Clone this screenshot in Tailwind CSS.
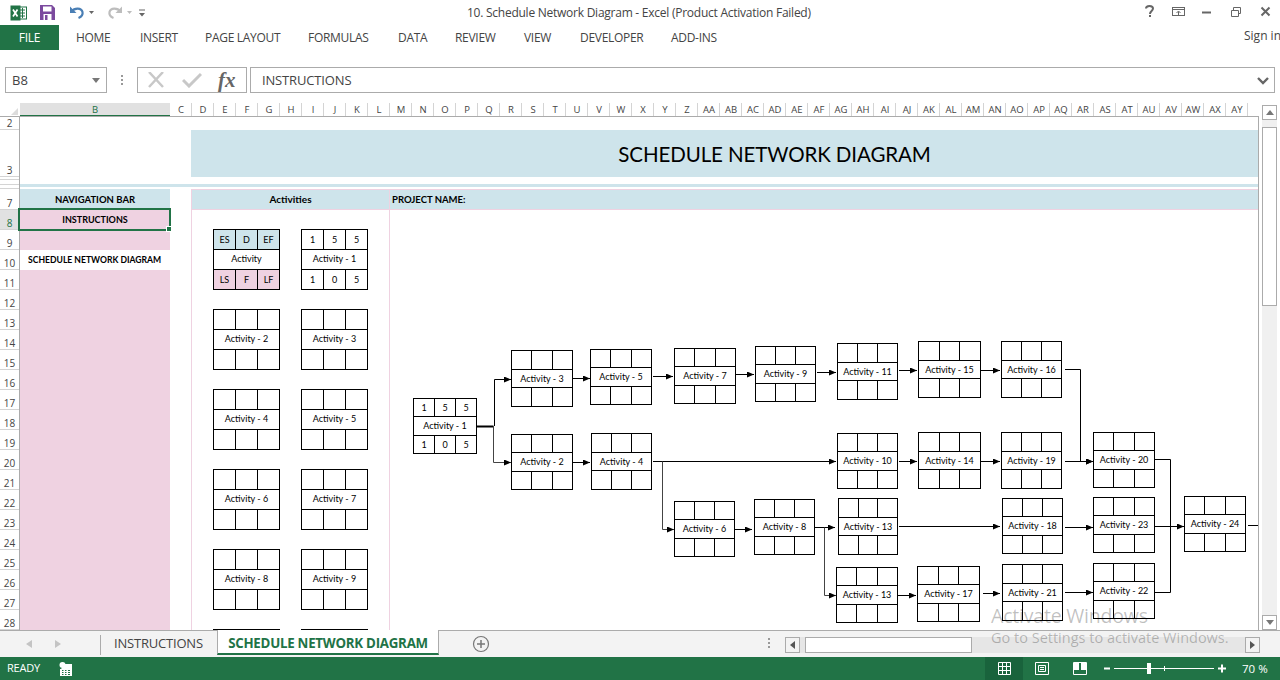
<!DOCTYPE html>
<html lang="en">
<head>
    <meta charset="UTF-8">
    <title>10. Schedule Network Diagram - Excel</title>
    <script src="https://cdn.jsdelivr.net/npm/@tailwindcss/browser@4"></script>
</head>
<body class="bg-white overflow-hidden">
<div class="relative w-[1280px] h-[680px] flex flex-col overflow-hidden bg-white text-[#444] font-['Open_Sans',sans-serif]">

    <!-- title bar -->
    <div class="relative h-[25px] flex items-center shrink-0">
        <svg class="ml-[10px] w-[17px] h-[16px]" viewBox="0 0 17 16">
            <rect x="7" y="2" width="9.5" height="12" fill="#fff" stroke="#217346"/>
            <path d="M10 5h5M10 8h5M10 11h5M12.5 3v10" stroke="#217346"/>
            <rect x="0.5" y="0.5" width="10" height="15" fill="#217346"/>
            <path d="M3 4.5l4.5 7M7.5 4.5l-4.5 7" stroke="#fff" stroke-width="1.7"/>
        </svg>
        <svg class="ml-[13px] w-[15px] h-[15px]" viewBox="0 0 15 15">
            <path d="M0 0h12l3 3v12H0z" fill="#7b4a9e"/>
            <rect x="3" y="1.5" width="8.5" height="5" fill="#fff"/>
            <rect x="3.5" y="9" width="8" height="6" fill="#fff"/>
            <rect x="5" y="10" width="2.5" height="5" fill="#7b4a9e"/>
        </svg>
        <svg class="ml-[14px] w-[26px] h-[15px]" viewBox="0 0 26 15">
            <path d="M2.5 6.5c3-4 10-4 11 .5.6 3-1.5 5-4 6" fill="none" stroke="#4a7fb5" stroke-width="2.2"/>
            <path d="M1 1.5v6.5h6.5z" fill="#4a7fb5"/>
            <path d="M20 6h5l-2.5 3z" fill="#666"/>
        </svg>
        <svg class="ml-[12px] w-[26px] h-[15px]" viewBox="0 0 26 15">
            <path d="M13.5 6.5c-3-4-10-4-11 .5-.6 3 1.5 5 4 6" fill="none" stroke="#bdbdbd" stroke-width="2.2"/>
            <path d="M15 1.5v6.5H8.500z" fill="#bdbdbd"/>
            <path d="M20 6h5l-2.500 3z" fill="#bdbdbd"/>
        </svg>
        <svg class="ml-[6px] w-[7px] h-[8px]" viewBox="0 0 7 8">
            <path d="M0 1h6" stroke="#666"/><path d="M0 4h6L3 7.500z" fill="#666"/>
        </svg>
        <div class="absolute left-[467px] top-[4px] text-[12px] leading-[17px] tracking-[-0.25px] text-[#444] whitespace-nowrap">10. Schedule Network Diagram - Excel (Product Activation Failed)</div>
        <svg class="absolute left-[1143px] top-[4px] w-[130px] h-[16px]" viewBox="0 0 130 16">
            <path d="M3 4.500c0-3.500 7-3.500 7 0 0 2.500-3 2.500-3 5.500" fill="none" stroke="#666" stroke-width="2"/>
            <rect x="6" y="11" width="2" height="2" fill="#666"/>
            <rect x="29.500" y="3.500" width="12" height="8" fill="none" stroke="#666"/>
            <path d="M30 5.500h11M35.500 11V7.500M33.500 9l2-2 2 2" fill="none" stroke="#666"/>
            <path d="M59 8.500h9" stroke="#666" stroke-width="2"/>
            <path d="M88.500 6.500h7v6h-7zM90.500 6V3.500h7v6H96" fill="none" stroke="#666"/>
            <path d="M118.500 3.500l8 8M126.500 3.500l-8 8" stroke="#666" stroke-width="2"/>
        </svg>
    </div>

    <!-- ribbon tabs -->
    <div class="relative h-[25px] flex items-center shrink-0 text-[12px] tracking-[-0.3px] text-[#444]">
        <div class="w-[59px] h-[25px] bg-[#217346] text-white flex items-center justify-center mr-[17px]">FILE</div>
        <div class="w-[64px]">HOME</div>
        <div class="w-[65px]">INSERT</div>
        <div class="w-[103px]">PAGE LAYOUT</div>
        <div class="w-[90px]">FORMULAS</div>
        <div class="w-[57px]">DATA</div>
        <div class="w-[69px]">REVIEW</div>
        <div class="w-[56px]">VIEW</div>
        <div class="w-[91px]">DEVELOPER</div>
        <div>ADD-INS</div>
        <div class="absolute left-[1244px] top-[2px] whitespace-nowrap tracking-[0px]">Sign in</div>
    </div>

    <!-- formula bar -->
    <div class="h-[26px] mt-[17px] flex shrink-0 text-[#444]">
        <div class="ml-[5px] w-[102px] border border-[#ababab] flex items-center justify-between pl-[6px] pr-[6px] pt-px text-[13px]">
            B8
            <svg class="w-[8px] h-[5px]" viewBox="0 0 8 5"><path d="M0 0h8L4 5z" fill="#777"/></svg>
        </div>
        <div class="w-[30px] flex flex-col items-center justify-center gap-[2px]">
            <span class="w-[2px] h-[2px] bg-[#999]"></span><span class="w-[2px] h-[2px] bg-[#999]"></span><span class="w-[2px] h-[2px] bg-[#999]"></span>
        </div>
        <div class="w-[110px] border border-[#ababab] flex items-center pl-[9px]">
            <svg class="w-[18px] h-[16px]" viewBox="0 0 18 16"><path d="M2 0l14 15M16 0L2 15" stroke="#c8c8c8" stroke-width="2.500"/></svg>
            <svg class="ml-[17px] w-[20px] h-[16px]" viewBox="0 0 20 16"><path d="M1 8l6 6L19 2" fill="none" stroke="#c8c8c8" stroke-width="3"/></svg>
            <span class="ml-[16px] text-[21px] leading-none italic font-bold text-[#666] font-['Liberation_Serif',serif]">fx</span>
        </div>
        <div class="ml-[3px] w-[1025px] border border-[#ababab] flex items-center justify-between pl-[11px] pr-[5px] pt-px text-[13px] tracking-[-0.15px]">
            INSTRUCTIONS
            <svg class="w-[12px] h-[8px]" viewBox="0 0 12 8"><path d="M1 1l5 5 5-5" fill="none" stroke="#666" stroke-width="2.400"/></svg>
        </div>
    </div>

    <!-- sheet + vertical scrollbar -->
    <div class="mt-[10px] h-[527px] flex shrink-0">
        <div class="relative w-[1259px] flex flex-col">
            <!-- column headers -->
            <div id="columns" class="h-[14px] flex shrink-0 overflow-hidden border-b border-[#ababab] text-[9.5px] leading-[13px] text-[#444]">
                <div class="w-[20px] shrink-0 flex items-end justify-end pr-[2px] pb-[1px]">
                    <svg class="w-[7px] h-[7px]" viewBox="0 0 7 7"><path d="M7 0v7H0z" fill="#dcdcdc"/></svg>
                </div>
                <div class="w-[150px] shrink-0 bg-[#e1e1e1] text-center text-[#217346] border-b-2 border-[#217346] h-[14px]">B</div>
            </div>

            <div class="flex h-[513px]">
                <!-- row headers -->
                <div id="rows" class="w-[20px] shrink-0 border-r border-[#ababab] overflow-hidden text-[10px] text-[#444]"></div>

                <!-- cells -->
                <div class="relative w-[1239px] border-r border-[#ababab] overflow-hidden">
                    <div class="h-[13px]"></div>
                    <div class="ml-[171px] pl-[100px] pt-[2px] h-[47px] bg-[#cee4eb] flex items-center justify-center text-[20.500px] tracking-[-0.1px] text-black font-['Lato',sans-serif]">SCHEDULE NETWORK DIAGRAM</div>
                    <div class="mt-[7px] h-[3px] bg-[#cee4eb]"></div>
                    <div class="mt-[2px] h-[441px] flex font-['Lato',sans-serif] text-black">
                        <!-- navigation -->
                        <div class="w-[150px] shrink-0 flex flex-col text-center font-bold text-[9.500px]">
                            <div class="h-[21px] pt-[2px] bg-[#cee4eb] flex items-center justify-center">NAVIGATION BAR</div>
                            <div class="h-[20px] bg-[#efd2e1] flex items-center justify-center text-[9px]">INSTRUCTIONS</div>
                            <div class="h-[20px] bg-[#efd2e1]"></div>
                            <div class="h-[20px] flex items-center pl-[8px] text-[8.600px] whitespace-nowrap">SCHEDULE NETWORK DIAGRAM</div>
                            <div class="flex-1 bg-[#efd2e1]"></div>
                        </div>
                        <!-- activities -->
                        <div class="ml-[21px] w-[199px] shrink-0 border-x border-[#efd2e1] flex flex-col">
                            <div class="h-[21px] shrink-0 bg-[#cee4eb] border-y border-[#efd2e1] flex items-center justify-center font-bold text-[10px]">Activities</div>
                            <div id="cards" class="pl-[21px] pt-[19px] grid grid-cols-[67px_67px] gap-x-[21px] gap-y-[19px] text-[9px]">
                                <div class="h-[61px] p-px gap-px bg-black grid grid-cols-3 grid-rows-3 text-center">
                                    <div class="bg-[#cee4eb] flex items-center justify-center">ES</div>
                                    <div class="bg-[#cee4eb] flex items-center justify-center">D</div>
                                    <div class="bg-[#cee4eb] flex items-center justify-center">EF</div>
                                    <div class="col-span-3 bg-white flex items-center justify-center pb-[2px]">Activity</div>
                                    <div class="bg-[#efd2e1] flex items-center justify-center">LS</div>
                                    <div class="bg-[#efd2e1] flex items-center justify-center">F</div>
                                    <div class="bg-[#efd2e1] flex items-center justify-center">LF</div>
                                </div>
                                <div class="h-[61px] p-px gap-px bg-black grid grid-cols-3 grid-rows-3 text-center">
                                    <div class="bg-white flex items-center justify-center">1</div>
                                    <div class="bg-white flex items-center justify-center">5</div>
                                    <div class="bg-white flex items-center justify-center">5</div>
                                    <div class="col-span-3 bg-white flex items-center justify-center pb-[2px]">Activity - 1</div>
                                    <div class="bg-white flex items-center justify-center">1</div>
                                    <div class="bg-white flex items-center justify-center">0</div>
                                    <div class="bg-white flex items-center justify-center">5</div>
                                </div>
                            </div>
                        </div>
                        <!-- project diagram -->
                        <div class="relative flex-1">
                            <div class="h-[21px] pt-[2px] bg-[#cee4eb] border-y border-[#efd2e1] flex items-center pl-[2px] font-bold text-[9.500px]">PROJECT NAME:</div>
                            <div id="diagram" class="absolute left-0 top-0 w-[868px] h-[441px] text-[9px]">
                                <svg class="absolute left-0 top-0 w-[868px] h-[441px]" viewBox="390 189 868 441" fill="none" stroke="#000">
                                    <defs>
                                        <marker id="head" markerUnits="userSpaceOnUse" markerWidth="7" markerHeight="6" refX="7" refY="3" orient="auto">
                                            <path d="M0 0L7 3L0 6z" fill="#000" stroke="none"/>
                                        </marker>
                                    </defs>
                                    <path d="M476 426.500h17.500" stroke-width="2"/>
                                    <path d="M494.500 426V379.500H511" marker-end="url(#head)"/>
                                    <path d="M493.500 426V462.500H511" stroke="#444" marker-end="url(#head)"/>
                                    <path d="M572 378.500h18" marker-end="url(#head)"/>
                                    <path d="M572 462.500h18" marker-end="url(#head)"/>
                                    <path d="M653 376.500h20" marker-end="url(#head)"/>
                                    <path d="M653 461.500h183" marker-end="url(#head)"/>
                                    <path d="M662.500 461.500V529.500H674" stroke="#444" marker-end="url(#head)"/>
                                    <path d="M736 374.500h18" marker-end="url(#head)"/>
                                    <path d="M817 372.500h19" marker-end="url(#head)"/>
                                    <path d="M899 370.500h18" marker-end="url(#head)"/>
                                    <path d="M981 370.500h19" marker-end="url(#head)"/>
                                    <path d="M899 461.500h18" marker-end="url(#head)"/>
                                    <path d="M981 461.500h19" marker-end="url(#head)"/>
                                    <path d="M1065 369.500h15.500V461.500H1093" marker-end="url(#head)"/>
                                    <path d="M1065 461.500h28" marker-end="url(#head)"/>
                                    <path d="M735 529.500h17" marker-end="url(#head)"/>
                                    <path d="M815 527.500h20" marker-end="url(#head)"/>
                                    <path d="M824.500 527.500V595.500H836" stroke="#444" marker-end="url(#head)"/>
                                    <path d="M899 526.500h101" marker-end="url(#head)"/>
                                    <path d="M898 595.500h18" marker-end="url(#head)"/>
                                    <path d="M983 593.500h17" marker-end="url(#head)"/>
                                    <path d="M1065 527.500h28" marker-end="url(#head)"/>
                                    <path d="M1065 592.500h28" marker-end="url(#head)"/>
                                    <path d="M1155 459.500h15.500V592.500H1155"/>
                                    <path d="M1155 526.500h29" marker-end="url(#head)"/>
                                    <path d="M1248 525.500h10"/>
                                </svg>
                            </div>
                        </div>
                    </div>
                </div>
            </div>

            <!-- selected cell -->
            <div class="absolute left-[18px] top-[105px] w-[153px] h-[23px] border-2 border-[#217346]">
                <div class="absolute right-[-3px] bottom-[-3px] w-[6px] h-[6px] bg-[#217346] border border-white"></div>
            </div>
        </div>

        <!-- vertical scrollbar -->
        <div class="w-[21px] pl-[3px] flex flex-col">
            <div class="mt-[2px] w-[15px] h-[15px] border border-[#ababab] flex items-center justify-center shrink-0">
                <svg class="w-[8px] h-[5px]" viewBox="0 0 8 5"><path d="M4 0l4 5H0z" fill="#777"/></svg>
            </div>
            <div class="w-[15px] flex-1 bg-[#f0f0f0]">
                <div class="mt-[7px] w-[15px] h-[179px] bg-white border border-[#ababab]"></div>
            </div>
            <div class="w-[15px] h-[15px] border border-[#ababab] flex items-center justify-center shrink-0">
                <svg class="w-[8px] h-[5px]" viewBox="0 0 8 5"><path d="M0 0h8L4 5z" fill="#777"/></svg>
            </div>
        </div>
    </div>

    <!-- sheet tabs -->
    <div class="relative h-[27px] shrink-0 bg-[#f3f3f3] flex border-t border-[#ababab] text-[#444]">
        <div class="w-[100px] flex items-center">
            <svg class="ml-[26px] w-[6px] h-[8px]" viewBox="0 0 6 8"><path d="M6 0v8L0 4z" fill="#c4c4c4"/></svg>
            <svg class="ml-[23px] w-[6px] h-[8px]" viewBox="0 0 6 8"><path d="M0 0v8l6-4z" fill="#c4c4c4"/></svg>
        </div>
        <div class="w-px h-[20px] mt-[4px] bg-[#ababab]"></div>
        <div class="w-[116px] pl-[13px] text-[13px] leading-[24px] tracking-[-0.2px]">INSTRUCTIONS</div>
        <div class="relative -top-px w-[222px] h-[25px] bg-white border-x border-[#ababab] border-b-2 border-b-[#217346] flex items-center justify-center pt-[4px] text-[13.300px] leading-none tracking-[-0.25px] font-bold text-[#217346] whitespace-nowrap">SCHEDULE NETWORK DIAGRAM</div>
        <svg class="ml-[33px] mt-[4px] w-[18px] h-[18px]" viewBox="0 0 18 18">
            <circle cx="9" cy="9" r="7.500" fill="none" stroke="#777" stroke-width="1.200"/>
            <path d="M5 9h8M9 5v8" stroke="#777" stroke-width="1.500"/>
        </svg>
        <div class="absolute left-[768px] top-[7px] flex flex-col gap-[2px]">
            <span class="w-[2px] h-[2px] bg-[#999]"></span><span class="w-[2px] h-[2px] bg-[#999]"></span><span class="w-[2px] h-[2px] bg-[#999]"></span>
        </div>
        <div class="absolute left-[785px] top-[6px] w-[475px] h-[16px] flex bg-[#e6e6e6]">
            <div class="w-[15px] border border-[#ababab] bg-[#f3f3f3] flex items-center justify-center">
                <svg class="w-[5px] h-[8px]" viewBox="0 0 5 8"><path d="M5 0v8L0 4z" fill="#555"/></svg>
            </div>
            <div class="ml-[5px] w-[167px] border border-[#ababab] bg-white"></div>
            <div class="ml-auto w-[15px] border border-[#ababab] bg-[#f3f3f3] flex items-center justify-center">
                <svg class="w-[5px] h-[8px]" viewBox="0 0 5 8"><path d="M0 0v8l5-4z" fill="#555"/></svg>
            </div>
        </div>
    </div>

    <!-- status bar -->
    <div class="relative h-[23px] shrink-0 bg-[#217346] flex items-center text-white text-[11px] tracking-[-0.2px]">
        <span class="ml-[7px]">READY</span>
        <svg class="ml-[19px] w-[14px] h-[14px]" viewBox="0 0 14 14">
            <circle cx="3.500" cy="3" r="3" fill="#fff"/>
            <path d="M6 2h7v12H1V7h1" fill="#fff"/>
            <path d="M3 8.500h1.500M6 8.500h1.500M9 8.500h2M3 10.500h1.500M6 10.500h1.500M9 10.500h2M3 12.500h1.500M6 12.500h1.500M9 12.500h2" stroke="#217346"/>
        </svg>
        <div class="absolute left-[985px] top-0 w-[38px] h-[23px] bg-[#19633c] flex items-center justify-center">
            <svg class="w-[13px] h-[13px]" viewBox="0 0 13 13"><path d="M.5.500h12v12H.5zM.5 4.500h12M.5 8.500h12M4.500.500v12M8.500.500v12" fill="none" stroke="#fff"/></svg>
        </div>
        <svg class="absolute left-[1035px] top-[5px] w-[14px] h-[13px]" viewBox="0 0 14 13"><path d="M.5.500h13v12H.5z" fill="none" stroke="#fff"/><path d="M3.500 3.500h7v6h-7zM5 5.500h4M5 7.500h4" fill="none" stroke="#fff"/></svg>
        <svg class="absolute left-[1073px] top-[5px] w-[14px] h-[13px]" viewBox="0 0 14 13"><path d="M.5.500h13v12H.5z" fill="none" stroke="#fff"/><path d="M1 1h5v7H1zM8 1h5v7H8z" fill="#fff"/></svg>
        <svg class="absolute left-[1104px] top-[6px] w-[124px] h-[11px]" viewBox="0 0 124 11">
            <path d="M0 5.500h6" stroke="#fff" stroke-width="2"/>
            <path d="M10 5.500h100" stroke="#fff"/>
            <path d="M60.500 3v5" stroke="#fff"/>
            <rect x="43" y="0" width="4" height="11" fill="#fff"/>
            <path d="M114 5.500h8M118 1.500v8" stroke="#fff" stroke-width="2"/>
        </svg>
        <span class="absolute left-[1242px] top-[3px] text-[11.500px] tracking-[0px]">70 %</span>
    </div>

    <!-- windows watermark -->
    <div class="absolute left-[991px] top-[602px] pointer-events-none text-black/25 whitespace-nowrap">
        <div class="text-[19.500px] leading-[28px] tracking-[-0.2px]">Activate Windows</div>
        <div class="-mt-px text-[14.500px] leading-[18px]">Go to Settings to activate Windows.</div>
    </div>
</div>

<script>
    // column letters C..AY
    const columns = document.getElementById('columns');
    const letters = [];
    for (const c of 'CDEFGHIJKLMNOPQRSTUVWXYZ') letters.push(c);
    for (const c of 'ABCDEFGHIJKLMNOPQRSTUVWXY') letters.push('A' + c);
    letters.forEach(l => {
        const el = document.createElement('div');
        el.className = 'w-[22px] shrink-0 pl-px text-center border-r border-[#d4d4d4]';
        el.textContent = l;
        columns.appendChild(el);
    });

    // row headers: [label, height]
    const rows = document.getElementById('rows');
    const rowData = [['2', 13], ['3', 47], ['', 3], ['', 5], ['', 4], ['7', 21]];
    for (let n = 8; n <= 28; n++) rowData.push([String(n), 20]);
    rowData.forEach(([label, h]) => {
        const el = document.createElement('div');
        el.className = 'flex items-end justify-center border-b border-[#d4d4d4] leading-[11px]'
            + (label === '8' ? ' bg-[#e1e1e1] text-[#217346]' : '');
        el.style.height = h + 'px';
        el.textContent = label;
        rows.appendChild(el);
    });

    function boxHtml(label, labelClass) {
        const blank = '<div class="bg-white"></div>'.repeat(3);
        return blank + '<div class="col-span-3 bg-white flex items-center justify-center ' + labelClass + '">' + label + '</div>' + blank;
    }

    // activity cards, left panel (the last row runs under the tab bar, only its top edge shows)
    const cards = document.getElementById('cards');
    for (let n = 2; n <= 11; n++) {
        const el = document.createElement('div');
        el.className = 'h-[61px] p-px gap-px bg-black grid grid-cols-3 grid-rows-3 text-center';
        el.innerHTML = boxHtml(n <= 9 ? 'Activity - ' + n : '', 'pb-[2px]');
        cards.appendChild(el);
    }

    // network nodes: [activity, x, y, w, h] in page pixels
    const nodes = [
        [3, 511, 350, 62, 57], [2, 511, 434, 62, 56], [5, 590, 349, 62, 56], [4, 591, 433, 61, 57],
        [7, 674, 348, 62, 56], [9, 755, 346, 61, 56], [11, 837, 343, 61, 57], [15, 918, 341, 63, 57],
        [16, 1001, 341, 61, 57], [10, 837, 433, 61, 56], [14, 918, 432, 63, 57], [19, 1001, 432, 61, 57],
        [6, 674, 501, 61, 56], [8, 754, 499, 61, 56], [13, 838, 498, 60, 57], [13, 836, 567, 62, 56],
        [17, 917, 566, 63, 56], [18, 1002, 498, 61, 56], [21, 1002, 564, 61, 57], [20, 1093, 432, 62, 56],
        [23, 1093, 497, 62, 56], [22, 1093, 563, 62, 56], [24, 1184, 496, 62, 56]
    ];
    const diagram = document.getElementById('diagram');
    function addNode(html, x, y, w, h) {
        const el = document.createElement('div');
        el.className = 'absolute p-px gap-px bg-black grid grid-cols-3 grid-rows-3 text-center';
        el.style.left = (x - 390) + 'px';
        el.style.top = (y - 189) + 'px';
        el.style.width = w + 'px';
        el.style.height = h + 'px';
        el.innerHTML = html;
        diagram.appendChild(el);
    }
    const cell = t => '<div class="bg-white flex items-center justify-center">' + t + '</div>';
    addNode(cell(1) + cell(5) + cell(5)
        + '<div class="col-span-3 bg-white flex items-center justify-center">Activity - 1</div>'
        + cell(1) + cell(0) + cell(5), 413, 398, 64, 56);
    nodes.forEach(([n, x, y, w, h]) => addNode(boxHtml('Activity - ' + n, ''), x, y, w, h));
</script>
</body>
</html>
